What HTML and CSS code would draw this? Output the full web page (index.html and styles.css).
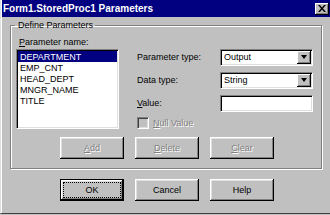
FILE: index.html
```html
<!DOCTYPE html>
<html>
<head>
<meta charset="utf-8">
<link rel="stylesheet" href="styles.css">
</head>
<body>
<div class="window">
  <div class="titlebar">
    <span class="title">Form1.StoredProc1 Parameters</span>
    <span class="close"><svg width="8" height="7" viewBox="0 0 8 7"><path d="M0 0h2l2 2.5L6 0h2L5 3.5 8 7H6L4 4.5 2 7H0l3-3.5z" fill="#000"/></svg></span>
  </div>
  <div class="body">
    <fieldset class="group">
      <legend>Define Parameters</legend>
      <div class="group-main">
        <div class="names">
          <div class="lbl"><u>P</u>arameter name:</div>
          <ul class="listbox">
            <li class="sel">DEPARTMENT</li>
            <li>EMP_CNT</li>
            <li>HEAD_DEPT</li>
            <li>MNGR_NAME</li>
            <li>TITLE</li>
          </ul>
        </div>
        <div class="props">
          <div class="row"><span class="plabel">Parameter type:</span><div class="combo"><span class="val">Output</span><span class="drop"><i></i></span></div></div>
          <div class="row"><span class="plabel">Data type:</span><div class="combo"><span class="val">String</span><span class="drop"><i></i></span></div></div>
          <div class="row"><span class="plabel"><u>V</u>alue:</span><div class="field"></div></div>
          <div class="check"><span class="box"></span><span class="dis"><u>N</u>ull Value</span></div>
        </div>
      </div>
      <div class="btnrow">
        <span class="btn dis"><u>A</u>dd</span>
        <span class="btn dis"><u>D</u>elete</span>
        <span class="btn dis"><u>C</u>lear</span>
      </div>
    </fieldset>
    <div class="btnrow bottom">
      <span class="btn default"><span class="focus">OK</span></span>
      <span class="btn">Cancel</span>
      <span class="btn">Help</span>
    </div>
  </div>
</div>
</body>
</html>
```
FILE: styles.css
```css
* { box-sizing: border-box; }
html, body { margin: 0; padding: 0; overflow: hidden; background: #c0c0c0; }
body {
  width: 330px; height: 215px;
  font-family: "Liberation Sans", Arial, sans-serif;
  font-size: 9px; line-height: 11px; color: #000;
}
.window {
  width: 332px; height: 214px;
  background: #c0c0c0;
  border-left: 1px solid #dfdfdf;
  border-bottom: 1px solid #404040;
  padding-left: 1px;
  box-shadow: inset 1px 0 #fff;
}
.titlebar {
  height: 17px; background: #000080;
  display: flex; justify-content: space-between; align-items: flex-start;
  padding: 0 3px 0 1px;
}
.title { color: #fff; font-weight: bold; font-size: 10px; line-height: 12px; margin-top: 3px; }
.close {
  width: 14px; height: 12px; margin-top: 3px; background: #c0c0c0;
  box-shadow: inset -1px -1px #000, inset 1px 1px #fff, inset -2px -2px #808080;
  display: flex; align-items: center; justify-content: center; padding-bottom: 1px;
}
.close svg { display: block; }
.body { padding: 3px 0 0 8px; }
.group {
  margin: 0; width: 312px;
  padding: 6px 8px 9px 5px;
  border: 1px solid #808080;
  box-shadow: inset 1px 1px #fff, 1px 1px #fff;
}
.group legend { padding: 0 2px 0 3px; margin-left: -1px; line-height: 11px; }
.group-main { display: flex; }
.names { width: 103px; }
.lbl { margin-left: 3px; height: 12px; }
.listbox {
  list-style: none; margin: 0; padding: 1px;
  width: 103px; height: 80px; background: #fff;
  border: 1px solid; border-color: #808080 #fff #fff #808080;
  box-shadow: inset 1px 1px #000, inset -1px -1px #dfdfdf;
}
.listbox li { height: 11px; line-height: 11px; padding-left: 2px; padding-top: 1px; }
.listbox li.sel { background: #000080; color: #fff; }
.props { margin-left: 18px; padding-top: 12px; }
.row { display: flex; align-items: center; height: 17px; margin-bottom: 6px; }
.plabel { width: 83px; }
.combo, .field {
  width: 93px; height: 17px; background: #fff;
  border: 1px solid; border-color: #808080 #fff #fff #808080;
  box-shadow: inset 1px 1px #000, inset -1px -1px #dfdfdf;
  display: flex; align-items: center; justify-content: space-between;
  padding: 1px;
}
.val { padding-left: 2px; }
.drop {
  width: 14px; height: 13px; background: #c0c0c0;
  box-shadow: inset -1px -1px #000, inset 1px 1px #fff, inset -2px -2px #808080;
  display: flex; align-items: center; justify-content: center; padding-bottom: 1px;
}
.drop i {
  width: 0; height: 0;
  border-left: 3.5px solid transparent; border-right: 3.5px solid transparent;
  border-top: 4px solid #000;
}
.check { display: flex; align-items: center; height: 12px; margin-top: -1px; }
.box {
  width: 12px; height: 12px; margin-right: 4px; background: #c0c0c0;
  border: 1px solid; border-color: #808080 #fff #fff #808080;
  box-shadow: inset 1px 1px #404040, inset -1px -1px #dfdfdf;
}
.dis { color: #808080; text-shadow: 1px 1px #fff; }
.btnrow { display: flex; gap: 11px; padding-left: 44px; margin-top: 8px; }
.btnrow.bottom { margin-top: 10px; padding-left: 50px; }
.btn {
  width: 64px; height: 22px;
  display: flex; align-items: center; justify-content: center;
  box-shadow: inset -1px -1px #000, inset 1px 1px #fff, inset -2px -2px #808080, inset 2px 2px #dfdfdf;
}
.btn.default {
  border: 1px solid #000;
}
.focus {
  width: 58px; height: 16px; border: 1px dotted #000;
  display: flex; align-items: center; justify-content: center;
}
```
